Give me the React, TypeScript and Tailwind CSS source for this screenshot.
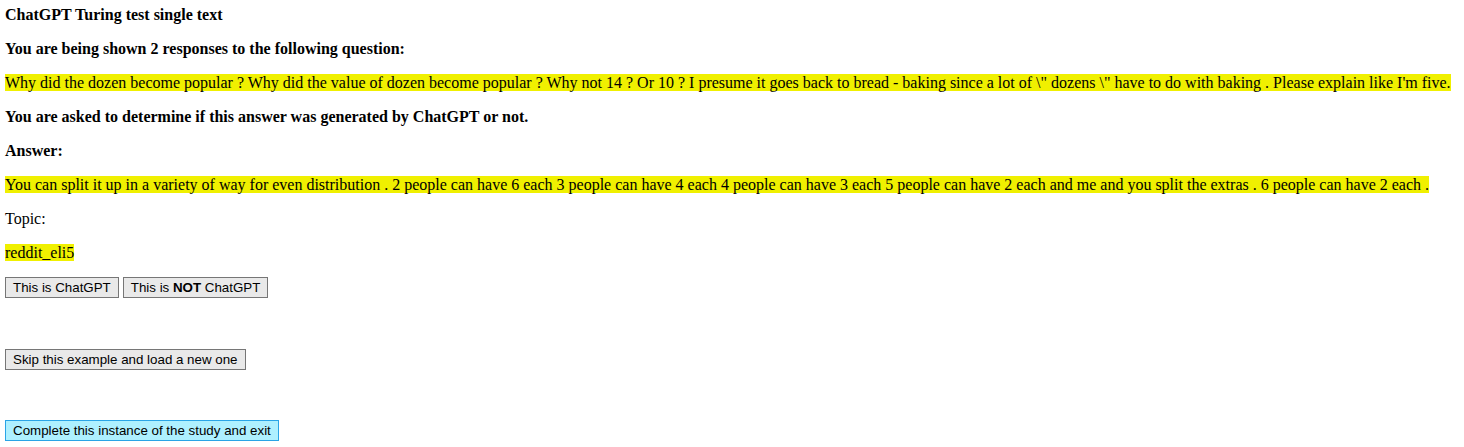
import React from 'react';

const hl = 'bg-[#f0f000]';
const btn =
  "h-[21px] px-[7px] border border-[#767676] bg-[#e9e9e9] text-[13.33px] leading-[15px] text-black [font-family:'Liberation_Sans',Arial,sans-serif]";

export default function App() {
  return (
    <div className="pl-[5px] pt-[6px] bg-white text-black text-[16px] leading-[18px] [font-family:'Liberation_Serif','Times_New_Roman',serif]">
      <p className="font-bold">ChatGPT Turing test single text</p>
      <p className="mt-4 font-bold">You are being shown 2 responses to the following question:</p>
      <p className="mt-4">
        <span className={hl}>
          Why did the dozen become popular ? Why did the value of dozen become popular ? Why not 14 ? Or 10 ? I
          presume it goes back to bread - baking since a lot of \" dozens \" have to do with baking . Please explain
          like I'm five.
        </span>
      </p>
      <p className="mt-4 font-bold">You are asked to determine if this answer was generated by ChatGPT or not.</p>
      <p className="mt-4 font-bold">Answer:</p>
      <p className="mt-4">
        <span className={hl}>
          You can split it up in a variety of way for even distribution . 2 people can have 6 each 3 people can have
          4 each 4 people can have 3 each 5 people can have 2 each and me and you split the extras . 6 people can have
          2 each .
        </span>
      </p>
      <p className="mt-4">Topic:</p>
      <p className="mt-4">
        <span className={hl}>reddit_eli5</span>
      </p>

      {/* answer buttons */}
      <div className="mt-[15px] flex gap-[4px]">
        <button className={btn}>This is ChatGPT</button>
        <button className={btn}>
          This is <b>NOT</b> ChatGPT
        </button>
      </div>

      <div className="mt-[51px] flex">
        <button className={btn}>Skip this example and load a new one</button>
      </div>

      <div className="mt-[50px] flex">
        <button className={btn + ' !border-[#2aa4e6] !bg-[#aef0ff]'}>Complete this instance of the study and exit</button>
      </div>
    </div>
  );
}
